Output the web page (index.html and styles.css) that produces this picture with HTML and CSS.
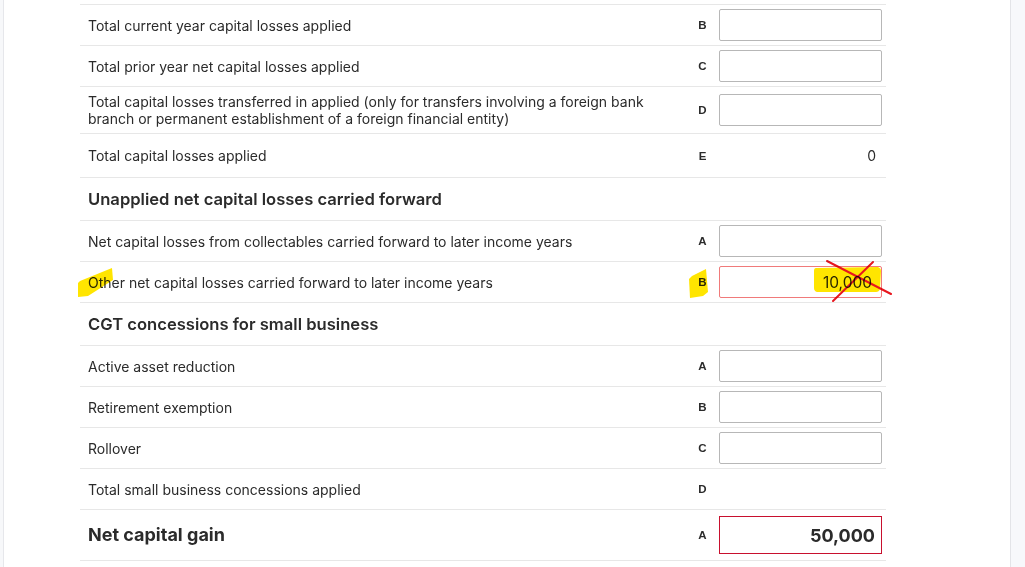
FILE: index.html
```html
<!DOCTYPE html>
<html lang="en">
<head>
<meta charset="utf-8">
<title>Capital gains</title>
<link rel="stylesheet" href="styles.css">
</head>
<body>
<div class="page">
  <aside class="rail rail-left"></aside>
  <main class="content">
    <div class="form">
      <div class="row">
        <div class="label">Total current year capital losses applied</div>
        <div class="code">B</div>
        <div class="field"><div class="box"></div></div>
      </div>
      <div class="row">
        <div class="label">Total prior year net capital losses applied</div>
        <div class="code">C</div>
        <div class="field"><div class="box"></div></div>
      </div>
      <div class="row row-tall">
        <div class="label">Total capital losses transferred in applied (only for transfers involving a foreign bank<br>branch or permanent establishment of a foreign financial entity)</div>
        <div class="code">D</div>
        <div class="field"><div class="box"></div></div>
      </div>
      <div class="row row-total">
        <div class="label">Total capital losses applied</div>
        <div class="code">E</div>
        <div class="field"><div class="value">0</div></div>
      </div>
      <div class="row row-heading">
        <div class="heading">Unapplied net capital losses carried forward</div>
      </div>
      <div class="row">
        <div class="label">Net capital losses from collectables carried forward to later income years</div>
        <div class="code">A</div>
        <div class="field"><div class="box"></div></div>
      </div>
      <div class="row row-flagged">
        <div class="label">Other net capital losses carried forward to later income years</div>
        <div class="code">B</div>
        <div class="field"><div class="box box-error">10,000</div></div>
        <svg class="annot" viewBox="0 0 806 40" width="806" height="40" aria-hidden="true">
          <path class="marker" d="M-2 21 L0 19 L32 6 L33 18 L8 34 L-2 35 Z"/>
          <path class="marker" d="M612 14 L626 7 L628 30 L623 34 L610 36 L609 17 Z"/>
          <path class="marker" d="M736 6 L798 5 Q801 6 801 9 L800 27 Q799 30 796 30 L737 30 Q734 29 734 26 L734 9 Q734 6 736 6 Z"/>
          <path class="cross" d="M747 -1 L811 32 M793 0 L753 39"/>
        </svg>
      </div>
      <div class="row row-heading">
        <div class="heading">CGT concessions for small business</div>
      </div>
      <div class="row">
        <div class="label">Active asset reduction</div>
        <div class="code">A</div>
        <div class="field"><div class="box"></div></div>
      </div>
      <div class="row">
        <div class="label">Retirement exemption</div>
        <div class="code">B</div>
        <div class="field"><div class="box"></div></div>
      </div>
      <div class="row">
        <div class="label">Rollover</div>
        <div class="code">C</div>
        <div class="field"><div class="box"></div></div>
      </div>
      <div class="row">
        <div class="label">Total small business concessions applied</div>
        <div class="code">D</div>
        <div class="field"></div>
      </div>
      <div class="row row-result">
        <div class="label label-result">Net capital gain</div>
        <div class="code">A</div>
        <div class="field"><div class="box box-result">50,000</div></div>
      </div>
    </div>
  </main>
  <aside class="rail rail-right"></aside>
</div>
</body>
</html>
```

FILE: styles.css
```css
html, body {
  margin: 0;
  padding: 0;
  background: #ffffff;
}

body {
  font-family: Inter, "Noto Sans", "Liberation Sans", sans-serif;
  color: #2b2b2b;
}

.page {
  display: flex;
  height: 567px;
  overflow: hidden;
}

.rail-left {
  width: 3px;
  background: #f7f8fa;
  border-right: 1px solid #e6e7eb;
}

.rail-right {
  width: 14px;
  background: #f7f8fb;
  border-left: 1px solid #e3e4e8;
}

.content {
  flex: 1;
  padding: 4px 0 0 76px;
}

.form {
  width: 806px;
  border-top: 1px solid #e7e7e7;
}

.row {
  position: relative;
  display: flex;
  align-items: center;
  min-height: 40px;
  border-bottom: 1px solid #e7e7e7;
}

.row-tall {
  min-height: 46px;
}

.row-total {
  min-height: 43px;
}

.row-heading {
  min-height: 42px;
}

.row-result {
  min-height: 50px;
}

.label {
  flex: 1;
  padding: 6px 0 6px 8px;
  font-size: 14px;
  line-height: 17px;
}

.label-result {
  font-size: 18px;
  font-weight: 700;
  line-height: 22px;
  padding-top: 0;
  padding-bottom: 0;
}

.heading {
  padding-left: 8px;
  font-size: 16.6px;
  font-weight: 600;
  line-height: 20px;
}

.code {
  width: 33px;
  text-align: center;
  font-family: "Liberation Sans", Arial, sans-serif;
  font-size: 11.5px;
  font-weight: 700;
}

.field {
  width: 163px;
  margin-right: 4px;
}

.box {
  box-sizing: border-box;
  height: 32px;
  border: 1px solid #b7b7b7;
  border-radius: 2px;
  padding: 0 9px;
  display: flex;
  align-items: center;
  justify-content: flex-end;
  font-size: 15.5px;
}

.box-error {
  border-color: #f07a7a;
}

.box-result {
  height: 38px;
  border-color: #c8102e;
  border-radius: 0;
  padding-right: 6px;
  font-size: 18px;
  font-weight: 700;
}

.value {
  text-align: right;
  padding-right: 6px;
  font-size: 14px;
}

.annot {
  position: absolute;
  left: 0;
  top: 0;
  overflow: visible;
  pointer-events: none;
  mix-blend-mode: multiply;
}

.marker {
  fill: #ffe500;
}

.cross {
  fill: none;
  stroke: #e8161e;
  stroke-width: 2;
  stroke-linecap: round;
}
```
